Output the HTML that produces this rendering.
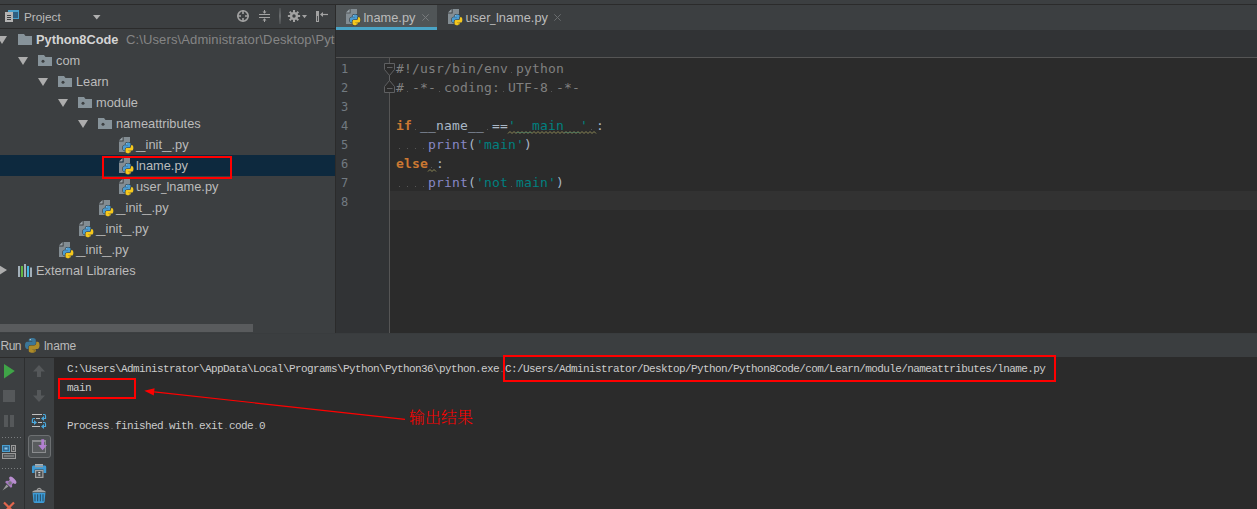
<!DOCTYPE html>
<html>
<head>
<meta charset="utf-8">
<title>PyCharm</title>
<style>
html,body{margin:0;padding:0;}
body{width:1257px;height:509px;overflow:hidden;background:#3c3f41;position:relative;
 font-family:"Liberation Sans","Noto Sans CJK SC",sans-serif;font-size:12.8px;color:#bbbbbb;}
.abs{position:absolute;}
svg{display:block;overflow:visible;}
#topline{left:0;top:4px;width:1257px;height:1px;background:#2b2b2b;}
#proj{left:0;top:5px;width:335px;height:328px;background:#3c3f41;overflow:hidden;}
#projhead{left:0;top:0;width:335px;height:23px;border-bottom:1px solid #2b2b2b;}
.row{position:absolute;left:0;width:335px;height:21px;line-height:22px;white-space:nowrap;}
.row span.t{position:absolute;top:0;}
.us{display:inline-block;width:9.6px;transform:scaleX(0.667);transform-origin:0 50%;}
.us1{display:inline-block;width:5.6px;transform:scaleX(0.78);transform-origin:0 50%;}
.sel{background:#0d293e;}
#tabs{left:336px;top:5px;width:921px;height:25px;background:#3c3f41;}
#tab1{left:0;top:0;width:101px;height:22px;background:#505557;border-bottom:3px solid #4aa4c6;}
#crumb{left:336px;top:30px;width:921px;height:28px;background:#313335;border-bottom:1px solid #555555;box-sizing:border-box;}
#editor{left:336px;top:58px;width:921px;height:275px;background:#2b2b2b;overflow:hidden;}
#gutter{left:0;top:0;width:53px;height:275px;background:#313335;border-right:1px solid #555555;}
.ln{position:absolute;left:5px;width:20px;color:#727a81;font-family:"DejaVu Sans Mono","Liberation Mono",monospace;font-size:12px;line-height:19px;height:19px;}
.code{position:absolute;left:60px;white-space:pre;font-family:"DejaVu Sans Mono","Liberation Mono",monospace;font-size:13px;letter-spacing:0.174px;line-height:19px;height:19px;color:#a9b7c6;}
.kw{color:#cc7832;font-weight:bold;}
.cm{color:#808080;}
.st{color:#008080;}
.bi{color:#8888c6;}
.ws{color:#505050;}
.sq{text-decoration:underline wavy #8a8a5c 1px;text-underline-offset:3px;}
#divider{left:335px;top:5px;width:1px;height:328px;background:#2b2b2b;}
#hscroll{left:0;top:324px;width:335px;height:8px;background:#3c3f41;}
#hthumb{left:0;top:0;width:253px;height:8px;background:#595b5d;}
#runsep{left:0;top:333px;width:1257px;height:1px;background:#393c3e;}
#runhead{left:0;top:334px;width:1257px;height:24px;background:#3b3e40;border-bottom:1px solid #2b2b2b;box-sizing:border-box;}
#runtool{left:0;top:358px;width:54px;height:151px;background:#3c3f41;}
#console{left:54px;top:358px;width:1203px;height:151px;background:#2b2b2b;}
.con{position:absolute;white-space:pre;font-family:"Liberation Mono","Noto Sans CJK SC",monospace;font-size:11px;letter-spacing:-0.6px;color:#cccccc;line-height:14px;}
.redbox{position:absolute;border:2px solid #ff0000;box-sizing:border-box;}
</style>
</head>
<body>
<div id="topline" class="abs"></div>

<div id="proj" class="abs">
  <div id="projhead" class="abs">
    <svg class="abs" style="left:4px;top:4px" width="16" height="14" viewBox="0 0 16 14"><rect x="4.5" y="1.5" width="10" height="8" fill="#2f5f80" stroke="#4a9fc9"/><rect x="4" y="1" width="11" height="2" fill="#4a9fc9"/><rect x="1" y="3" width="8" height="10" fill="#b4b4b4"/><rect x="3" y="6" width="4" height="1" fill="#3c3f41"/><rect x="3" y="8" width="4" height="1" fill="#3c3f41"/><rect x="3" y="10" width="4" height="1" fill="#3c3f41"/></svg>
    <svg class="abs" style="left:93px;top:10px" width="8" height="5" viewBox="0 0 8 5"><path d="M0 0H7.5L3.75 4.5Z" fill="#b0b0b0"/></svg>
    <svg class="abs" style="left:237px;top:5px" width="12" height="12" viewBox="0 0 12 12"><circle cx="6" cy="6" r="5.2" fill="none" stroke="#a2a2a2" stroke-width="1.6"/><path d="M6 0.5V4M6 8V11.5M0.5 6H4M8 6H11.5" stroke="#a2a2a2" stroke-width="1.6"/></svg>
    <svg class="abs" style="left:259px;top:5px" width="12" height="12" viewBox="0 0 12 12"><path d="M0 4.5H11M0 7.5H11" stroke="#a2a2a2" stroke-width="1"/><path d="M5.5 0V3M5.5 9V12" stroke="#a2a2a2" stroke-width="1"/><path d="M3.5 1.5L5.5 3.8L7.5 1.5ZM3.5 10.5L5.5 8.2L7.5 10.5Z" fill="#a2a2a2"/></svg>
    <div class="abs" style="left:279px;top:3px;width:2px;height:16px;background:linear-gradient(#4a4d4f,#6a6d6f,#4a4d4f);"></div>
    <svg class="abs" style="left:288px;top:5px" width="12" height="12" viewBox="0 0 12 12"><path d="M12.11 4.93 L12.11 7.07 L10.08 6.98 L9.58 8.19 L11.07 9.57 L9.57 11.07 L8.19 9.58 L6.98 10.08 L7.07 12.11 L4.93 12.11 L5.02 10.08 L3.81 9.58 L2.43 11.07 L0.93 9.57 L2.42 8.19 L1.92 6.98 L-0.11 7.07 L-0.11 4.93 L1.92 5.02 L2.42 3.81 L0.93 2.43 L2.43 0.93 L3.81 2.42 L5.02 1.92 L4.93 -0.11 L7.07 -0.11 L6.98 1.92 L8.19 2.42 L9.57 0.93 L11.07 2.43 L9.58 3.81 L10.08 5.02Z" fill="#a2a2a2"/><circle cx="6" cy="6" r="1.7" fill="#3c3f41"/></svg>
    <svg class="abs" style="left:302px;top:10px" width="6" height="4" viewBox="0 0 6 4"><path d="M0 0H5L2.5 3.2Z" fill="#a2a2a2"/></svg>
    <svg class="abs" style="left:315px;top:5px" width="14" height="13" viewBox="0 0 14 13"><rect x="1.5" y="1.5" width="2" height="10" fill="#4a4d4f" stroke="#a2a2a2" stroke-width="1"/><rect x="1" y="1" width="3" height="5" fill="#a2a2a2"/><path d="M6 4.5H13" stroke="#a2a2a2" stroke-width="1.2"/><path d="M5 4.5L8 2V7Z" fill="#a2a2a2"/></svg>
    <span class="abs" style="left:24px;top:4px;line-height:16px;font-size:11.8px;color:#bbbbbb;">Project</span>
  </div>
  <div class="row" style="top:24px;"><svg class="abs" style="left:-3px;top:7px" width="10" height="8" viewBox="0 0 10 8"><path d="M0 0H10L5 8Z" fill="#adadad"/></svg><svg class="abs" style="left:18px;top:5px" width="14" height="11" viewBox="0 0 14 11"><path d="M0 0H6L7.5 2H14V11H0Z" fill="#87939a"/></svg><span class="t" style="left:36px;font-weight:bold;color:#d4d4d4;">Python8Code</span><span class="t" style="left:126px;color:#858585;font-size:13px;letter-spacing:0.12px;">C:\Users\Administrator\Desktop\Pyt</span></div>
  <div class="row" style="top:45px;"><svg class="abs" style="left:17.5px;top:7px" width="10" height="8" viewBox="0 0 10 8"><path d="M0 0H10L5 8Z" fill="#adadad"/></svg><svg class="abs" style="left:38px;top:5px" width="14" height="11" viewBox="0 0 14 11"><path d="M0 0H6L7.5 2H14V11H0Z" fill="#87939a"/><circle cx="5" cy="6.3" r="1.5" fill="#3c3f41"/></svg><span class="t" style="left:56px;">com</span></div>
  <div class="row" style="top:66px;"><svg class="abs" style="left:37.5px;top:7px" width="10" height="8" viewBox="0 0 10 8"><path d="M0 0H10L5 8Z" fill="#adadad"/></svg><svg class="abs" style="left:58px;top:5px" width="14" height="11" viewBox="0 0 14 11"><path d="M0 0H6L7.5 2H14V11H0Z" fill="#87939a"/><circle cx="5" cy="6.3" r="1.5" fill="#3c3f41"/></svg><span class="t" style="left:76px;">Learn</span></div>
  <div class="row" style="top:87px;"><svg class="abs" style="left:57.5px;top:7px" width="10" height="8" viewBox="0 0 10 8"><path d="M0 0H10L5 8Z" fill="#adadad"/></svg><svg class="abs" style="left:78px;top:5px" width="14" height="11" viewBox="0 0 14 11"><path d="M0 0H6L7.5 2H14V11H0Z" fill="#87939a"/><circle cx="5" cy="6.3" r="1.5" fill="#3c3f41"/></svg><span class="t" style="left:96px;">module</span></div>
  <div class="row" style="top:108px;"><svg class="abs" style="left:77.5px;top:7px" width="10" height="8" viewBox="0 0 10 8"><path d="M0 0H10L5 8Z" fill="#adadad"/></svg><svg class="abs" style="left:98px;top:5px" width="14" height="11" viewBox="0 0 14 11"><path d="M0 0H6L7.5 2H14V11H0Z" fill="#87939a"/><circle cx="5" cy="6.3" r="1.5" fill="#3c3f41"/></svg><span class="t" style="left:116px;">nameattributes</span></div>
  <div class="row" style="top:129px;"><svg class="abs" style="left:119px;top:3px" width="15" height="16" viewBox="0 0 15 16"><path d="M4.6 0H11V15H0V4.6H4.6Z" fill="#838d93"/><path d="M0 3.6L3.6 0V3.6Z" fill="#99a3a9"/><g transform="translate(3.8 5.6)"><g transform="scale(0.095)"><path d="M54.92 0.001c-4.58 0.021-8.96 0.412-12.81 1.094-11.35 2-13.41 6.2-13.41 13.93v10.22h26.81v3.406h-36.87c-7.79 0-14.62 4.684-16.75 13.59-2.46 10.21-2.57 16.59 0 27.25 1.91 7.94 6.46 13.59 14.25 13.59h9.22v-12.25c0-8.85 7.66-16.66 16.75-16.66h26.78c7.45 0 13.41-6.138 13.41-13.62v-25.53c0-7.266-6.13-12.72-13.41-13.94-4.6-0.766-9.38-1.114-13.97-1.093z" fill="#4a9bd1" stroke="#3c4447" stroke-width="14" paint-order="stroke"/><path d="M85.64 28.66v11.91c0 9.23-7.83 17-16.75 17h-26.78c-7.34 0-13.41 6.28-13.41 13.62v25.53c0 7.27 6.32 11.54 13.41 13.62 8.49 2.5 16.63 2.95 26.78 0 6.75-1.95 13.41-5.89 13.41-13.62v-10.22h-26.78v-3.41h40.19c7.79 0 10.7-5.43 13.41-13.59 2.8-8.4 2.68-16.47 0-27.25-1.93-7.76-5.6-13.59-13.41-13.59z" fill="#f6c81c" stroke="#3c4447" stroke-width="14" paint-order="stroke"/><circle cx="40.5" cy="12" r="5" fill="#dfe9f0" opacity="0.85"/><circle cx="70.5" cy="98.5" r="5" fill="#5a4a10" opacity="0.8"/></g></g></svg><span class="t" style="left:136px;"><span class="us">__</span>init<span class="us">__</span>.py</span></div>
  <div class="row sel" style="top:150px;"><svg class="abs" style="left:119px;top:3px" width="15" height="16" viewBox="0 0 15 16"><path d="M4.6 0H11V15H0V4.6H4.6Z" fill="#838d93"/><path d="M0 3.6L3.6 0V3.6Z" fill="#99a3a9"/><g transform="translate(3.8 5.6)"><g transform="scale(0.095)"><path d="M54.92 0.001c-4.58 0.021-8.96 0.412-12.81 1.094-11.35 2-13.41 6.2-13.41 13.93v10.22h26.81v3.406h-36.87c-7.79 0-14.62 4.684-16.75 13.59-2.46 10.21-2.57 16.59 0 27.25 1.91 7.94 6.46 13.59 14.25 13.59h9.22v-12.25c0-8.85 7.66-16.66 16.75-16.66h26.78c7.45 0 13.41-6.138 13.41-13.62v-25.53c0-7.266-6.13-12.72-13.41-13.94-4.6-0.766-9.38-1.114-13.97-1.093z" fill="#4a9bd1" stroke="#3c4447" stroke-width="14" paint-order="stroke"/><path d="M85.64 28.66v11.91c0 9.23-7.83 17-16.75 17h-26.78c-7.34 0-13.41 6.28-13.41 13.62v25.53c0 7.27 6.32 11.54 13.41 13.62 8.49 2.5 16.63 2.95 26.78 0 6.75-1.95 13.41-5.89 13.41-13.62v-10.22h-26.78v-3.41h40.19c7.79 0 10.7-5.43 13.41-13.59 2.8-8.4 2.68-16.47 0-27.25-1.93-7.76-5.6-13.59-13.41-13.59z" fill="#f6c81c" stroke="#3c4447" stroke-width="14" paint-order="stroke"/><circle cx="40.5" cy="12" r="5" fill="#dfe9f0" opacity="0.85"/><circle cx="70.5" cy="98.5" r="5" fill="#5a4a10" opacity="0.8"/></g></g></svg><span class="t" style="left:136px;">lname.py</span></div>
  <div class="row" style="top:171px;"><svg class="abs" style="left:119px;top:3px" width="15" height="16" viewBox="0 0 15 16"><path d="M4.6 0H11V15H0V4.6H4.6Z" fill="#838d93"/><path d="M0 3.6L3.6 0V3.6Z" fill="#99a3a9"/><g transform="translate(3.8 5.6)"><g transform="scale(0.095)"><path d="M54.92 0.001c-4.58 0.021-8.96 0.412-12.81 1.094-11.35 2-13.41 6.2-13.41 13.93v10.22h26.81v3.406h-36.87c-7.79 0-14.62 4.684-16.75 13.59-2.46 10.21-2.57 16.59 0 27.25 1.91 7.94 6.46 13.59 14.25 13.59h9.22v-12.25c0-8.85 7.66-16.66 16.75-16.66h26.78c7.45 0 13.41-6.138 13.41-13.62v-25.53c0-7.266-6.13-12.72-13.41-13.94-4.6-0.766-9.38-1.114-13.97-1.093z" fill="#4a9bd1" stroke="#3c4447" stroke-width="14" paint-order="stroke"/><path d="M85.64 28.66v11.91c0 9.23-7.83 17-16.75 17h-26.78c-7.34 0-13.41 6.28-13.41 13.62v25.53c0 7.27 6.32 11.54 13.41 13.62 8.49 2.5 16.63 2.95 26.78 0 6.75-1.95 13.41-5.89 13.41-13.62v-10.22h-26.78v-3.41h40.19c7.79 0 10.7-5.43 13.41-13.59 2.8-8.4 2.68-16.47 0-27.25-1.93-7.76-5.6-13.59-13.41-13.59z" fill="#f6c81c" stroke="#3c4447" stroke-width="14" paint-order="stroke"/><circle cx="40.5" cy="12" r="5" fill="#dfe9f0" opacity="0.85"/><circle cx="70.5" cy="98.5" r="5" fill="#5a4a10" opacity="0.8"/></g></g></svg><span class="t" style="left:136px;">user<span class="us1">_</span>lname.py</span></div>
  <div class="row" style="top:192px;"><svg class="abs" style="left:99px;top:3px" width="15" height="16" viewBox="0 0 15 16"><path d="M4.6 0H11V15H0V4.6H4.6Z" fill="#838d93"/><path d="M0 3.6L3.6 0V3.6Z" fill="#99a3a9"/><g transform="translate(3.8 5.6)"><g transform="scale(0.095)"><path d="M54.92 0.001c-4.58 0.021-8.96 0.412-12.81 1.094-11.35 2-13.41 6.2-13.41 13.93v10.22h26.81v3.406h-36.87c-7.79 0-14.62 4.684-16.75 13.59-2.46 10.21-2.57 16.59 0 27.25 1.91 7.94 6.46 13.59 14.25 13.59h9.22v-12.25c0-8.85 7.66-16.66 16.75-16.66h26.78c7.45 0 13.41-6.138 13.41-13.62v-25.53c0-7.266-6.13-12.72-13.41-13.94-4.6-0.766-9.38-1.114-13.97-1.093z" fill="#4a9bd1" stroke="#3c4447" stroke-width="14" paint-order="stroke"/><path d="M85.64 28.66v11.91c0 9.23-7.83 17-16.75 17h-26.78c-7.34 0-13.41 6.28-13.41 13.62v25.53c0 7.27 6.32 11.54 13.41 13.62 8.49 2.5 16.63 2.95 26.78 0 6.75-1.95 13.41-5.89 13.41-13.62v-10.22h-26.78v-3.41h40.19c7.79 0 10.7-5.43 13.41-13.59 2.8-8.4 2.68-16.47 0-27.25-1.93-7.76-5.6-13.59-13.41-13.59z" fill="#f6c81c" stroke="#3c4447" stroke-width="14" paint-order="stroke"/><circle cx="40.5" cy="12" r="5" fill="#dfe9f0" opacity="0.85"/><circle cx="70.5" cy="98.5" r="5" fill="#5a4a10" opacity="0.8"/></g></g></svg><span class="t" style="left:116px;"><span class="us">__</span>init<span class="us">__</span>.py</span></div>
  <div class="row" style="top:213px;"><svg class="abs" style="left:79px;top:3px" width="15" height="16" viewBox="0 0 15 16"><path d="M4.6 0H11V15H0V4.6H4.6Z" fill="#838d93"/><path d="M0 3.6L3.6 0V3.6Z" fill="#99a3a9"/><g transform="translate(3.8 5.6)"><g transform="scale(0.095)"><path d="M54.92 0.001c-4.58 0.021-8.96 0.412-12.81 1.094-11.35 2-13.41 6.2-13.41 13.93v10.22h26.81v3.406h-36.87c-7.79 0-14.62 4.684-16.75 13.59-2.46 10.21-2.57 16.59 0 27.25 1.91 7.94 6.46 13.59 14.25 13.59h9.22v-12.25c0-8.85 7.66-16.66 16.75-16.66h26.78c7.45 0 13.41-6.138 13.41-13.62v-25.53c0-7.266-6.13-12.72-13.41-13.94-4.6-0.766-9.38-1.114-13.97-1.093z" fill="#4a9bd1" stroke="#3c4447" stroke-width="14" paint-order="stroke"/><path d="M85.64 28.66v11.91c0 9.23-7.83 17-16.75 17h-26.78c-7.34 0-13.41 6.28-13.41 13.62v25.53c0 7.27 6.32 11.54 13.41 13.62 8.49 2.5 16.63 2.95 26.78 0 6.75-1.95 13.41-5.89 13.41-13.62v-10.22h-26.78v-3.41h40.19c7.79 0 10.7-5.43 13.41-13.59 2.8-8.4 2.68-16.47 0-27.25-1.93-7.76-5.6-13.59-13.41-13.59z" fill="#f6c81c" stroke="#3c4447" stroke-width="14" paint-order="stroke"/><circle cx="40.5" cy="12" r="5" fill="#dfe9f0" opacity="0.85"/><circle cx="70.5" cy="98.5" r="5" fill="#5a4a10" opacity="0.8"/></g></g></svg><span class="t" style="left:96px;"><span class="us">__</span>init<span class="us">__</span>.py</span></div>
  <div class="row" style="top:234px;"><svg class="abs" style="left:59px;top:3px" width="15" height="16" viewBox="0 0 15 16"><path d="M4.6 0H11V15H0V4.6H4.6Z" fill="#838d93"/><path d="M0 3.6L3.6 0V3.6Z" fill="#99a3a9"/><g transform="translate(3.8 5.6)"><g transform="scale(0.095)"><path d="M54.92 0.001c-4.58 0.021-8.96 0.412-12.81 1.094-11.35 2-13.41 6.2-13.41 13.93v10.22h26.81v3.406h-36.87c-7.79 0-14.62 4.684-16.75 13.59-2.46 10.21-2.57 16.59 0 27.25 1.91 7.94 6.46 13.59 14.25 13.59h9.22v-12.25c0-8.85 7.66-16.66 16.75-16.66h26.78c7.45 0 13.41-6.138 13.41-13.62v-25.53c0-7.266-6.13-12.72-13.41-13.94-4.6-0.766-9.38-1.114-13.97-1.093z" fill="#4a9bd1" stroke="#3c4447" stroke-width="14" paint-order="stroke"/><path d="M85.64 28.66v11.91c0 9.23-7.83 17-16.75 17h-26.78c-7.34 0-13.41 6.28-13.41 13.62v25.53c0 7.27 6.32 11.54 13.41 13.62 8.49 2.5 16.63 2.95 26.78 0 6.75-1.95 13.41-5.89 13.41-13.62v-10.22h-26.78v-3.41h40.19c7.79 0 10.7-5.43 13.41-13.59 2.8-8.4 2.68-16.47 0-27.25-1.93-7.76-5.6-13.59-13.41-13.59z" fill="#f6c81c" stroke="#3c4447" stroke-width="14" paint-order="stroke"/><circle cx="40.5" cy="12" r="5" fill="#dfe9f0" opacity="0.85"/><circle cx="70.5" cy="98.5" r="5" fill="#5a4a10" opacity="0.8"/></g></g></svg><span class="t" style="left:76px;"><span class="us">__</span>init<span class="us">__</span>.py</span></div>
  <div class="row" style="top:255px;"><svg class="abs" style="left:-1px;top:5px" width="8" height="10" viewBox="0 0 8 10"><path d="M0 0V10L8 5Z" fill="#adadad"/></svg><svg class="abs" style="left:18px;top:4px" width="14" height="13" viewBox="0 0 14 13"><rect x="0" y="2" width="2" height="11" fill="#a3b0ba"/><rect x="3" y="2" width="2" height="11" fill="#62b543"/><rect x="6" y="0" width="2" height="13" fill="#a3b0ba"/><rect x="9" y="2" width="2" height="11" fill="#40b6e0"/><rect x="12" y="3.5" width="2" height="9.5" fill="#a3b0ba"/></svg><span class="t" style="left:36px;">External Libraries</span></div>
</div>
<div class="redbox" style="left:102px;top:156px;width:130px;height:23px;"></div>
<div id="hscroll" class="abs"><div id="hthumb" class="abs"></div></div>
<div id="divider" class="abs"></div>

<div id="tabs" class="abs">
  <div id="tab1" class="abs"><svg class="abs" style="left:10px;top:4px" width="15" height="16" viewBox="0 0 15 16"><path d="M4.6 0H11V15H0V4.6H4.6Z" fill="#838d93"/><path d="M0 3.6L3.6 0V3.6Z" fill="#99a3a9"/><g transform="translate(3.8 5.6)"><g transform="scale(0.095)"><path d="M54.92 0.001c-4.58 0.021-8.96 0.412-12.81 1.094-11.35 2-13.41 6.2-13.41 13.93v10.22h26.81v3.406h-36.87c-7.79 0-14.62 4.684-16.75 13.59-2.46 10.21-2.57 16.59 0 27.25 1.91 7.94 6.46 13.59 14.25 13.59h9.22v-12.25c0-8.85 7.66-16.66 16.75-16.66h26.78c7.45 0 13.41-6.138 13.41-13.62v-25.53c0-7.266-6.13-12.72-13.41-13.94-4.6-0.766-9.38-1.114-13.97-1.093z" fill="#4a9bd1" stroke="#3c4447" stroke-width="14" paint-order="stroke"/><path d="M85.64 28.66v11.91c0 9.23-7.83 17-16.75 17h-26.78c-7.34 0-13.41 6.28-13.41 13.62v25.53c0 7.27 6.32 11.54 13.41 13.62 8.49 2.5 16.63 2.95 26.78 0 6.75-1.95 13.41-5.89 13.41-13.62v-10.22h-26.78v-3.41h40.19c7.79 0 10.7-5.43 13.41-13.59 2.8-8.4 2.68-16.47 0-27.25-1.93-7.76-5.6-13.59-13.41-13.59z" fill="#f6c81c" stroke="#3c4447" stroke-width="14" paint-order="stroke"/><circle cx="40.5" cy="12" r="5" fill="#dfe9f0" opacity="0.85"/><circle cx="70.5" cy="98.5" r="5" fill="#5a4a10" opacity="0.8"/></g></g></svg><span class="abs" style="left:27.5px;top:4px;line-height:17px;">lname.py</span><svg class="abs" style="left:86px;top:9px" width="7" height="7" viewBox="0 0 7 7"><path d="M0.3 0.3L6.7 6.7M6.7 0.3L0.3 6.7" stroke="#777a7c" stroke-width="1"/></svg></div>
  <svg class="abs" style="left:112px;top:4px" width="15" height="16" viewBox="0 0 15 16"><path d="M4.6 0H11V15H0V4.6H4.6Z" fill="#838d93"/><path d="M0 3.6L3.6 0V3.6Z" fill="#99a3a9"/><g transform="translate(3.8 5.6)"><g transform="scale(0.095)"><path d="M54.92 0.001c-4.58 0.021-8.96 0.412-12.81 1.094-11.35 2-13.41 6.2-13.41 13.93v10.22h26.81v3.406h-36.87c-7.79 0-14.62 4.684-16.75 13.59-2.46 10.21-2.57 16.59 0 27.25 1.91 7.94 6.46 13.59 14.25 13.59h9.22v-12.25c0-8.85 7.66-16.66 16.75-16.66h26.78c7.45 0 13.41-6.138 13.41-13.62v-25.53c0-7.266-6.13-12.72-13.41-13.94-4.6-0.766-9.38-1.114-13.97-1.093z" fill="#4a9bd1" stroke="#3c4447" stroke-width="14" paint-order="stroke"/><path d="M85.64 28.66v11.91c0 9.23-7.83 17-16.75 17h-26.78c-7.34 0-13.41 6.28-13.41 13.62v25.53c0 7.27 6.32 11.54 13.41 13.62 8.49 2.5 16.63 2.95 26.78 0 6.75-1.95 13.41-5.89 13.41-13.62v-10.22h-26.78v-3.41h40.19c7.79 0 10.7-5.43 13.41-13.59 2.8-8.4 2.68-16.47 0-27.25-1.93-7.76-5.6-13.59-13.41-13.59z" fill="#f6c81c" stroke="#3c4447" stroke-width="14" paint-order="stroke"/><circle cx="40.5" cy="12" r="5" fill="#dfe9f0" opacity="0.85"/><circle cx="70.5" cy="98.5" r="5" fill="#5a4a10" opacity="0.8"/></g></g></svg><span class="abs" style="left:129.5px;top:4px;line-height:17px;">user<span class="us1">_</span>lname.py</span><svg class="abs" style="left:217.5px;top:9px" width="7" height="7" viewBox="0 0 7 7"><path d="M0.3 0.3L6.7 6.7M6.7 0.3L0.3 6.7" stroke="#6a6d6f" stroke-width="1"/></svg>
</div>
<div id="crumb" class="abs"></div>
<div id="editor" class="abs">
  <div class="abs" style="left:54px;top:133px;width:867px;height:19px;background:#323232;"></div>
  <div id="gutter" class="abs"></div>
  <svg class="abs" style="left:47px;top:0px" width="12" height="40" viewBox="47 0 12 40"><path d="M48.5 5.5H58.5V11.5L53.5 17.5L48.5 11.5Z" fill="#2b2b2b" stroke="#5f6062" stroke-width="1"/><path d="M51 9.5H56.5" stroke="#5f6062" stroke-width="1"/><path d="M48.5 34.5H58.5V28.5L53.5 22.5L48.5 28.5Z" fill="#2b2b2b" stroke="#5f6062" stroke-width="1"/><path d="M51 30.5H56.5" stroke="#5f6062" stroke-width="1"/><path d="M53.5 17.5V22.5" stroke="#5f6062" stroke-width="1"/></svg>
  <div class="ln" style="top:2px;">1</div>
  <div class="code" style="top:1px;"><span class="cm">#!/usr/bin/env python</span></div>
  <div class="ln" style="top:21px;">2</div>
  <div class="code" style="top:20px;"><span class="cm"># -*- coding: UTF-8 -*-</span></div>
  <div class="ln" style="top:40px;">3</div>
  <div class="ln" style="top:59px;">4</div>
  <div class="code" style="top:58px;"><span class="kw">if</span> __name__ ==<span class="st">'__main__'</span> :</div>
  <div class="ln" style="top:78px;">5</div>
  <div class="code" style="top:77px;">    <span class="bi">print</span>(<span class="st">'main'</span>)</div>
  <div class="ln" style="top:97px;">6</div>
  <div class="code" style="top:96px;"><span class="kw">else</span> :</div>
  <div class="ln" style="top:116px;">7</div>
  <div class="code" style="top:115px;">    <span class="bi">print</span>(<span class="st">'not main'</span>)</div>
  <div class="ln" style="top:135px;">8</div>
  <svg class="abs" style="left:0;top:0" width="921" height="274" viewBox="0 0 921 274"><g fill="#565656"><rect x="175" y="14" width="1" height="1"/><rect x="71" y="33" width="1" height="1"/><rect x="103" y="33" width="1" height="1"/><rect x="167" y="33" width="1" height="1"/><rect x="215" y="33" width="1" height="1"/><rect x="79" y="71" width="1" height="1"/><rect x="151" y="71" width="1" height="1"/><rect x="255" y="71" width="1" height="1"/><rect x="63" y="90" width="1" height="1"/><rect x="71" y="90" width="1" height="1"/><rect x="79" y="90" width="1" height="1"/><rect x="87" y="90" width="1" height="1"/><rect x="95" y="109" width="1" height="1"/><rect x="63" y="128" width="1" height="1"/><rect x="71" y="128" width="1" height="1"/><rect x="79" y="128" width="1" height="1"/><rect x="87" y="128" width="1" height="1"/><rect x="175" y="128" width="1" height="1"/></g><path d="M172 75.5 L174 73.5 L176 75.5 L178 73.5 L180 75.5 L182 73.5 L184 75.5 L186 73.5 L188 75.5 L190 73.5 L192 75.5 L194 73.5 L196 75.5 L198 73.5 L200 75.5 L202 73.5 L204 75.5 L206 73.5 L208 75.5 L210 73.5 L212 75.5 L214 73.5 L216 75.5 L218 73.5 L220 75.5 L222 73.5 L224 75.5 L226 73.5 L228 75.5 L230 73.5 L232 75.5 L234 73.5 L236 75.5 L238 73.5 L240 75.5 L242 73.5 L244 75.5 L246 73.5 L248 75.5 L250 73.5 L252 75.5 L254 73.5 L256 75.5 L258 73.5 L260 75.5" fill="none" stroke="#8c8856" stroke-width="1"/><path d="M92 113.5 L94 111.5 L96 113.5 L98 111.5 L100 113.5" fill="none" stroke="#8c8856" stroke-width="1"/></svg>
</div>

<div id="runsep" class="abs"></div>
<div id="runhead" class="abs">
  <span class="abs" style="left:0.5px;top:3px;line-height:18px;font-size:12px;letter-spacing:-0.5px;">Run</span>
  <svg class="abs" style="left:25px;top:4px" width="15" height="15" viewBox="0 0 15 15"><g transform="scale(0.131)"><path d="M54.92 0.001c-4.58 0.021-8.96 0.412-12.81 1.094-11.35 2-13.41 6.2-13.41 13.93v10.22h26.81v3.406h-36.87c-7.79 0-14.62 4.684-16.75 13.59-2.46 10.21-2.57 16.59 0 27.25 1.91 7.94 6.46 13.59 14.25 13.59h9.22v-12.25c0-8.85 7.66-16.66 16.75-16.66h26.78c7.45 0 13.41-6.138 13.41-13.62v-25.53c0-7.266-6.13-12.72-13.41-13.94-4.6-0.766-9.38-1.114-13.97-1.093z" fill="#3b7698"/><path d="M85.64 28.66v11.91c0 9.23-7.83 17-16.75 17h-26.78c-7.34 0-13.41 6.28-13.41 13.62v25.53c0 7.27 6.32 11.54 13.41 13.62 8.49 2.5 16.63 2.95 26.78 0 6.75-1.95 13.41-5.89 13.41-13.62v-10.22h-26.78v-3.41h40.19c7.79 0 10.7-5.43 13.41-13.59 2.8-8.4 2.68-16.47 0-27.25-1.93-7.76-5.6-13.59-13.41-13.59z" fill="#ad8b29"/><circle cx="40.5" cy="12" r="5" fill="#dfe9f0" opacity="0.85"/><circle cx="70.5" cy="98.5" r="5" fill="#5a4a10" opacity="0.8"/></g></svg>
  <span class="abs" style="left:44px;top:3px;line-height:18px;font-size:12px;letter-spacing:-0.1px;">lname</span>
</div>
<div id="runtool" class="abs">
<div class="abs" style="left:24px;top:0;width:1px;height:151px;background:#2d2f30;"></div>
<svg class="abs" style="left:0;top:0" width="54" height="151" viewBox="0 0 54 151"><path d="M4 6L14.8 13L4 20.5Z" fill="#3fa447"/><rect x="3" y="32" width="12" height="12" fill="#55585a"/><rect x="4" y="57" width="4" height="12" fill="#55585a"/><rect x="10" y="57" width="4" height="12" fill="#55585a"/><path d="M2 79.5H22" stroke="#7a7d7f" stroke-width="1" stroke-dasharray="1 2"/><path d="M2 110.5H22" stroke="#7a7d7f" stroke-width="1" stroke-dasharray="1 2"/><rect x="2.5" y="87.5" width="7" height="6" fill="#2f6a94" stroke="#4a9fd0"/><rect x="4.5" y="89.5" width="3" height="2" fill="#8fc3e6"/><rect x="11.5" y="87.5" width="4" height="6" fill="#4f5254" stroke="#9a9a9a"/><rect x="13" y="89" width="1.2" height="3" fill="#9a9a9a"/><rect x="2.5" y="95.5" width="13" height="5" fill="#4f5254" stroke="#9a9a9a"/><rect x="4" y="97.5" width="10" height="1" fill="#9a9a9a"/><g transform="translate(2 118)"><path d="M0.5 14.5L4.5 8.5L6.5 10.5Z" fill="#9a9a9a"/><path d="M3.2 6.2L8.8 11.8Q10.8 11 10 8.5L12.5 6L9 2.5L6.5 5Q4 4.2 3.2 6.2Z" fill="#a77bc0"/><ellipse cx="10.8" cy="4.2" rx="2" ry="4.6" transform="rotate(-45 10.8 4.2)" fill="#b98ed0"/><circle cx="8" cy="7" r="1.8" fill="#77797b"/></g><path d="M4 144.5L14 154.5M14 144.5L4 154.5" stroke="#e2664d" stroke-width="2.2"/><path d="M39 7L45 13.5H41V19H37V13.5H33Z" fill="#55585a"/><path d="M39 44L45 37.5H41V32H37V37.5H33Z" fill="#55585a"/><path d="M32 56.5H42M36 60.5H40M38 64.5H42M32 68.5H40" stroke="#c0c0c0" stroke-width="1.1"/><path d="M43 56.5H44.5Q45.5 56.5 45.5 58V60.5H43.5" fill="none" stroke="#4aa8dc" stroke-width="1.2"/><path d="M41 60.5L44 58V63Z" fill="#4aa8dc"/><path d="M35 60.5H33.5Q32.4 60.5 32.4 62V64.5H34.5" fill="none" stroke="#4aa8dc" stroke-width="1.2"/><path d="M37 64.5L34 62V67Z" fill="#4aa8dc"/><path d="M43 64.5H44.5Q45.5 64.5 45.5 66V68.5H43.5" fill="none" stroke="#4aa8dc" stroke-width="1.2"/><path d="M41 68.5L44 66V71Z" fill="#4aa8dc"/><rect x="28.5" y="77.5" width="22" height="22" rx="2.5" fill="#4c5052" stroke="#6d7072"/><rect x="32.5" y="82.5" width="13" height="12" fill="#5a5d5f" stroke="#8a8c8e"/><rect x="32" y="82" width="14" height="2" fill="#8a8c8e"/><path d="M41.3 81.2H44.2V87H47L42.6 92.3L38.2 87H41.3Z" fill="#b27fd0"/><rect x="35" y="106" width="8" height="3" fill="#b0b0b0"/><path d="M33 107.5H45Q46.2 107.5 46.2 109V115H43.5V111.5H34.5V115H32V109Q32 107.5 33 107.5Z" fill="#3d9bd6"/><rect x="35" y="108" width="8" height="1.3" fill="#9a9a9a"/><rect x="35.6" y="112.6" width="7.3" height="6.8" fill="#4a4d4f" stroke="#a4a4a4" stroke-width="1.2"/><rect x="38.3" y="114" width="2" height="1.2" fill="#e0e0e0"/><rect x="38.3" y="116.4" width="2" height="1.2" fill="#e0e0e0"/><path d="M37 131.8Q39.2 129 41.4 131.8" fill="none" stroke="#a0a0a0" stroke-width="1.2"/><path d="M32 134.2Q32.5 132.6 35 132.2Q39 131.4 43 132.2Q45.5 132.6 46 134.2Z" fill="#a4a4a4"/><path d="M32.6 134.8H45.4L44.6 143.4Q44.4 145 43 145H35Q33.6 145 33.4 143.4Z" fill="#3d9bd6"/><path d="M35 136.3V143.3M37.7 136.3V143.3M40.3 136.3V143.3M43 136.3V143.3" stroke="#23475f" stroke-width="1"/></svg>
</div>
<div id="console" class="abs">
  <div class="con" style="left:13px;top:4px;">C:\Users\Administrator\AppData\Local\Programs\Python\Python36\python.exe C:/Users/Administrator/Desktop/Python/Python8Code/com/Learn/module/nameattributes/lname.py</div>
  <div class="con" style="left:13px;top:23px;">main</div>
  <div class="con" style="left:13px;top:61px;">Process finished with exit code 0</div>
  <svg class="abs" style="left:0;top:0" width="1203" height="151" viewBox="0 0 1203 151"><g fill="#7a7a7a"><rect x="447.5" y="13" width="1" height="1"/><rect x="57.5" y="70" width="1" height="1"/><rect x="111.5" y="70" width="1" height="1"/><rect x="141.5" y="70" width="1" height="1"/><rect x="171.5" y="70" width="1" height="1"/><rect x="201.5" y="70" width="1" height="1"/></g></svg>
  <svg class="abs" style="left:0;top:0" width="400" height="100" viewBox="0 0 400 100"><path d="M100.2 33.9L351.0 61.4" stroke="#ff0000" stroke-width="1.1"/><path d="M90.3 32.8L99.8 37.5L100.6 30.3Z" fill="#ff0000"/></svg>
  <div class="abs" style="left:355px;top:51px;font-size:16px;line-height:18px;font-weight:300;color:#ff0000;font-family:'Liberation Serif','Noto Serif CJK SC',serif;">输出结果</div>
</div>
<div class="redbox" style="left:503px;top:355px;width:553px;height:27px;"></div>
<div class="redbox" style="left:58px;top:378px;width:78px;height:21px;"></div>
</body>
</html>
